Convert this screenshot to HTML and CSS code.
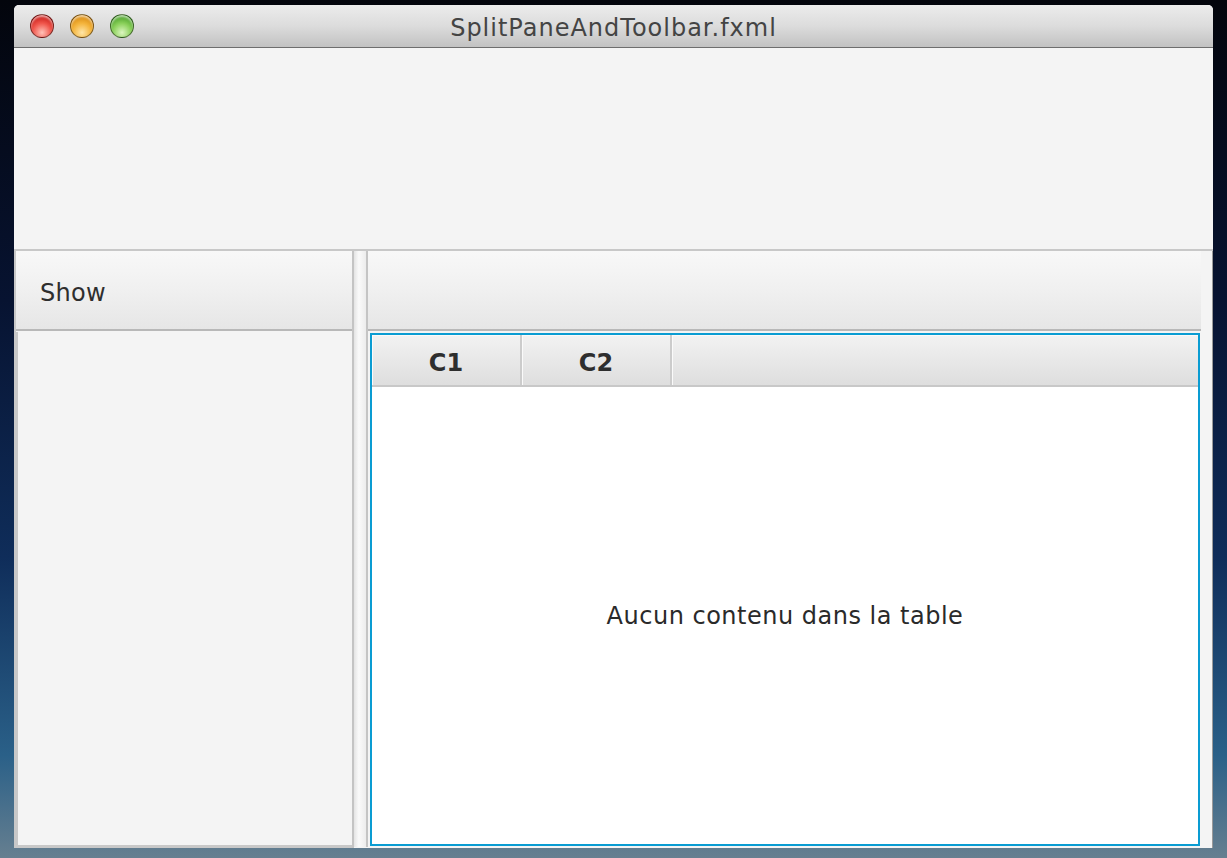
FILE: index.html
```html
<!DOCTYPE html>
<html lang="en">
<head>
    <meta charset="UTF-8">
    <meta name="viewport" content="width=device-width, initial-scale=1.0">
    <title>SplitPaneAndToolbar.fxml</title>
    <link rel="stylesheet" href="styles.css">
</head>
<body>
    <div class="window">
        <div class="titlebar">
            <div class="lights">
                <span class="light close"></span>
                <span class="light minimize"></span>
                <span class="light zoom"></span>
            </div>
            <div class="title">SplitPaneAndToolbar.fxml</div>
        </div>
        <div class="top-area"></div>
        <div class="split">
            <div class="pane left-pane">
                <div class="toolbar"><span class="tool-label">Show</span></div>
                <div class="pane-body"></div>
            </div>
            <div class="divider"></div>
            <div class="pane right-pane">
                <div class="toolbar right-toolbar"></div>
                <div class="table">
                    <div class="thead">
                        <div class="th">C1</div>
                        <div class="th">C2</div>
                        <div class="th filler"></div>
                    </div>
                    <div class="tbody">Aucun contenu dans la table</div>
                </div>
            </div>
        </div>
    </div>
</body>
</html>
```

FILE: styles.css
```css
body {
    margin: 0;
    height: 858px;
    overflow: hidden;
    font-family: "DejaVu Sans", "Noto Sans", sans-serif;
    background: linear-gradient(180deg, #03050c 0%, #071331 35%, #0f2d5a 65%, #2a6088 88%, #667f90 100%);
}

.window {
    margin: 5px 0 0 14px;
    width: 1199px;
    height: 843px;
    display: flex;
    flex-direction: column;
    background-color: #f4f4f4;
    border-radius: 5px 5px 0 0;
    overflow: hidden;
}

.titlebar {
    height: 42px;
    flex: none;
    display: flex;
    align-items: center;
    position: relative;
    background: linear-gradient(180deg, #ececec 0%, #dcdcdc 50%, #c2c2c2 100%);
    border-bottom: 1px solid #6e6e6e;
}

.lights {
    display: flex;
    gap: 16px;
    padding-left: 16px;
}

.light {
    width: 22px;
    height: 22px;
    border-radius: 50%;
    border: 1px solid rgba(0, 0, 0, 0.45);
    box-shadow: inset 0 2px 2px rgba(255, 255, 255, 0.6);
}

.close {
    background: radial-gradient(circle at 50% 80%, #ffc2b8 0%, #f0564c 45%, #c81c18 80%, #9a1010 100%);
}

.minimize {
    background: radial-gradient(circle at 50% 80%, #ffe6a8 0%, #f4b43c 45%, #d88a10 80%, #a86a08 100%);
}

.zoom {
    background: radial-gradient(circle at 50% 80%, #dcf6c0 0%, #8ad05a 45%, #4aa02a 80%, #2e7418 100%);
}

.title {
    position: absolute;
    left: 0;
    right: 0;
    padding-top: 3px;
    text-align: center;
    font-size: 24px;
    letter-spacing: 1px;
    color: #444444;
}

.top-area {
    height: 201px;
    flex: none;
    background-color: #f4f4f4;
}

.split {
    flex: 1;
    display: flex;
    border-top: 2px solid #c8c8c8;
    border-left: 2px solid #c8c8c8;
}

.pane {
    display: flex;
    flex-direction: column;
}

.left-pane {
    width: 336px;
    border-right: 2px solid #c4c4c4;
}

.toolbar {
    height: 78px;
    flex: none;
    display: flex;
    align-items: center;
    background: linear-gradient(180deg, #f8f8f8 0%, #f0f0f0 50%, #e6e6e6 100%);
    border-bottom: 2px solid #b8b8b8;
}

.tool-label {
    padding: 5px 0 0 24px;
    font-size: 24px;
    letter-spacing: 0.3px;
    color: #2e2e2e;
}

.pane-body {
    flex: 1;
    margin-top: 1px;
    background-color: #f4f4f4;
    border-left: 2px solid #c8c8c8;
    border-bottom: 3px solid #c8c8c8;
}

.divider {
    width: 12px;
    margin-bottom: 1px;
    background: linear-gradient(90deg, #e4e4e4 0%, #fafafa 40%, #ececec 100%);
    border-right: 2px solid #c4c4c4;
}

.right-pane {
    flex: 1;
    background-color: #f4f4f4;
    border-right: 1px solid #9a9a9a;
}

.right-toolbar {
    margin-right: 11px;
}

.table {
    width: 826px;
    height: 509px;
    margin: 2px 0 0 2px;
    display: flex;
    flex-direction: column;
    border: 2px solid #0a9cd2;
    background-color: #ffffff;
}

.thead {
    height: 50px;
    display: flex;
    background: linear-gradient(180deg, #f2f2f2 0%, #e8e8e8 50%, #dedede 100%);
    border-bottom: 2px solid #c8c8c8;
}

.th {
    width: 150px;
    padding-top: 5px;
    box-sizing: border-box;
    display: flex;
    align-items: center;
    justify-content: center;
    font-size: 24px;
    font-weight: bold;
    color: #2e2e2e;
    border-right: 2px solid #cccccc;
    box-shadow: inset 1px 1px 0 #fafafa;
}

.th.filler {
    flex: 1;
    border-right: none;
}

.tbody {
    flex: 1;
    display: flex;
    align-items: center;
    justify-content: center;
    font-size: 24px;
    letter-spacing: 0.5px;
    color: #2a2a2a;
}
```
